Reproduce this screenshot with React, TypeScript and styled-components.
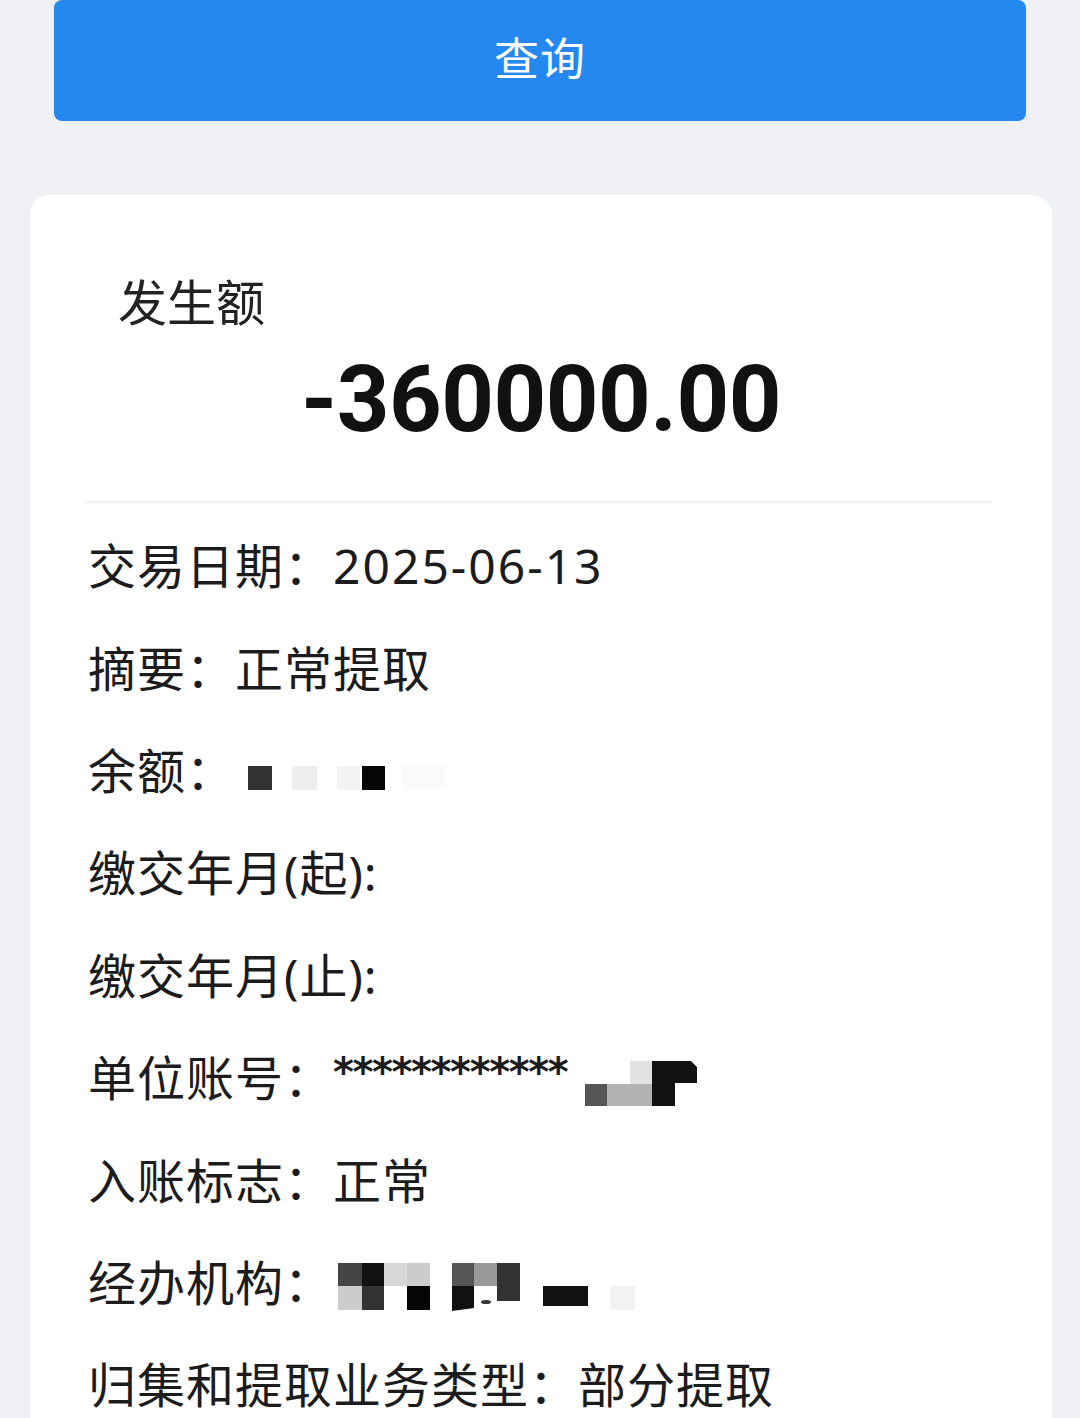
import React from 'react'
import styled, { createGlobalStyle } from 'styled-components'

const GlobalStyle = createGlobalStyle`
  html, body {
    margin: 0;
    padding: 0;
    background: #f0f1f4;
  }
  body {
    font-family: "Noto Sans", "Noto Sans CJK SC", sans-serif;
    color: #1c1c1c;
  }
`

type Cell = { x: number; y: number; w: number; h: number; c: string }

const balanceCells: Cell[] = [
  { x: 0, y: 27, w: 24, h: 24, c: '#333333' },
  { x: 44, y: 27, w: 25, h: 24, c: '#eceeed' },
  { x: 89, y: 27, w: 23, h: 24, c: '#f3f3f3' },
  { x: 114, y: 27, w: 23, h: 24, c: '#050505' },
  { x: 154, y: 27, w: 45, h: 24, c: '#fafafa' },
]

const agencyCells: Cell[] = [
  { x: 0, y: 12, w: 24, h: 23, c: '#444444' },
  { x: 24, y: 12, w: 22, h: 23, c: '#111111' },
  { x: 46, y: 12, w: 23, h: 23, c: '#d8d8d8' },
  { x: 69, y: 12, w: 23, h: 23, c: '#cccccc' },
  { x: 0, y: 35, w: 24, h: 24, c: '#cccccc' },
  { x: 24, y: 35, w: 22, h: 24, c: '#333333' },
  { x: 69, y: 35, w: 23, h: 24, c: '#050505' },
  { x: 114, y: 12, w: 22, h: 23, c: '#555555' },
  { x: 136, y: 12, w: 23, h: 23, c: '#999999' },
  { x: 159, y: 12, w: 23, h: 38, c: '#333333' },
  { x: 205, y: 35, w: 45, h: 20, c: '#111111' },
  { x: 272, y: 35, w: 25, h: 24, c: '#f2f2f2' },
]

const accountCells: Cell[] = [
  { x: 0, y: 38, w: 22, h: 22, c: '#555555' },
  { x: 22, y: 38, w: 45, h: 22, c: '#b3b3b3' },
  { x: 45, y: 15, w: 22, h: 23, c: '#e2e2e2' },
]

const Page = styled.div`
  padding: 0 28px 0 30px;
`

const QueryButton = styled.button`
  display: flex;
  align-items: center;
  justify-content: center;
  width: 972px;
  height: 121px;
  margin: 0 0 74px 24px;
  padding: 0 0 8px;
  border: none;
  border-radius: 8px;
  background: #2588f0;
  color: #ffffff;
  font-family: "Noto Sans CJK SC", sans-serif;
  font-size: 45px;
  letter-spacing: 1px;
`

const Card = styled.div`
  background: #ffffff;
  border-radius: 20px 20px 0 0;
  padding: 0 60px 0 55px;
`

const Summary = styled.div`
  padding-top: 76px;
`

const SummaryLabel = styled.div`
  padding-left: 33px;
  font-family: "Noto Sans CJK SC", sans-serif;
  font-size: 49px;
  line-height: 58px;
  color: #222222;
`

const Amount = styled.div`
  margin-top: 25px;
  text-align: center;
  font-family: Roboto, "Noto Sans", sans-serif;
  font-weight: 700;
  font-size: 92px;
  line-height: 92px;
  letter-spacing: -0.5px;
  color: #111111;
  padding-left: 5px;
`

const Divider = styled.div`
  margin-top: 55px;
  height: 2px;
  background: #f3f3f3;
`

const InfoList = styled.div`
  padding: 12px 0 0 3px;
`

const InfoRow = styled.div`
  display: flex;
  align-items: center;
  height: 102.4px;
  font-size: 48px;
  line-height: 58px;
  white-space: nowrap;
`

const Label = styled.span`
  letter-spacing: 1px;
`

const Value = styled.span<{ $gap?: number; $spacing?: number }>`
  margin-left: ${p => p.$gap ?? 0}px;
  letter-spacing: ${p => p.$spacing ?? 1}px;
  display: inline-flex;
  align-items: center;
`

const Stars = styled.span`
  font-family: "DejaVu Sans", sans-serif;
  font-weight: 700;
  font-size: 40px;
  letter-spacing: -1.4px;
  margin-right: 18px;
  transform: translateY(-6px);
`

function Mask({ cells, width, extra }: { cells: Cell[]; width: number; extra?: React.ReactNode }) {
  return (
    <svg width={width} height={64} viewBox={`0 0 ${width} 64`}>
      {cells.map((c, i) => (
        <rect key={i} x={c.x} y={c.y} width={c.w} height={c.h} fill={c.c} />
      ))}
      {extra}
    </svg>
  )
}

export default function App() {
  return (
    <>
      <GlobalStyle />
      <Page>
        <QueryButton>查询</QueryButton>
        <Card>
          <Summary>
            <SummaryLabel>发生额</SummaryLabel>
            <Amount>-360000.00</Amount>
          </Summary>
          <Divider />
          <InfoList>
            <InfoRow>
              <Label>交易日期：</Label>
              <Value $spacing={2}>2025-06-13</Value>
            </InfoRow>
            <InfoRow>
              <Label>摘要：</Label>
              <Value>正常提取</Value>
            </InfoRow>
            <InfoRow>
              <Label>余额：</Label>
              <Value $gap={13}>
                <Mask cells={balanceCells} width={200} />
              </Value>
            </InfoRow>
            <InfoRow>
              <Label>缴交年月(起):</Label>
            </InfoRow>
            <InfoRow>
              <Label>缴交年月(止):</Label>
            </InfoRow>
            <InfoRow>
              <Label>单位账号：</Label>
              <Value>
                <Stars>************</Stars>
                <Mask
                  cells={accountCells}
                  width={116}
                  extra={<path d="M67 15 H106 L112 21 V37 H90 V60 H67 Z" fill="#111111" />}
                />
              </Value>
            </InfoRow>
            <InfoRow>
              <Label>入账标志：</Label>
              <Value>正常</Value>
            </InfoRow>
            <InfoRow>
              <Label>经办机构：</Label>
              <Value $gap={5}>
                <Mask
                  cells={agencyCells}
                  width={300}
                  extra={
                    <>
                      <polygon points="114,35 136,35 136,57 114,60" fill="#111111" />
                      <ellipse cx={148} cy={51} rx={5} ry={2} fill="#333333" />
                    </>
                  }
                />
              </Value>
            </InfoRow>
            <InfoRow>
              <Label>归集和提取业务类型：</Label>
              <Value>部分提取</Value>
            </InfoRow>
          </InfoList>
        </Card>
      </Page>
    </>
  )
}
